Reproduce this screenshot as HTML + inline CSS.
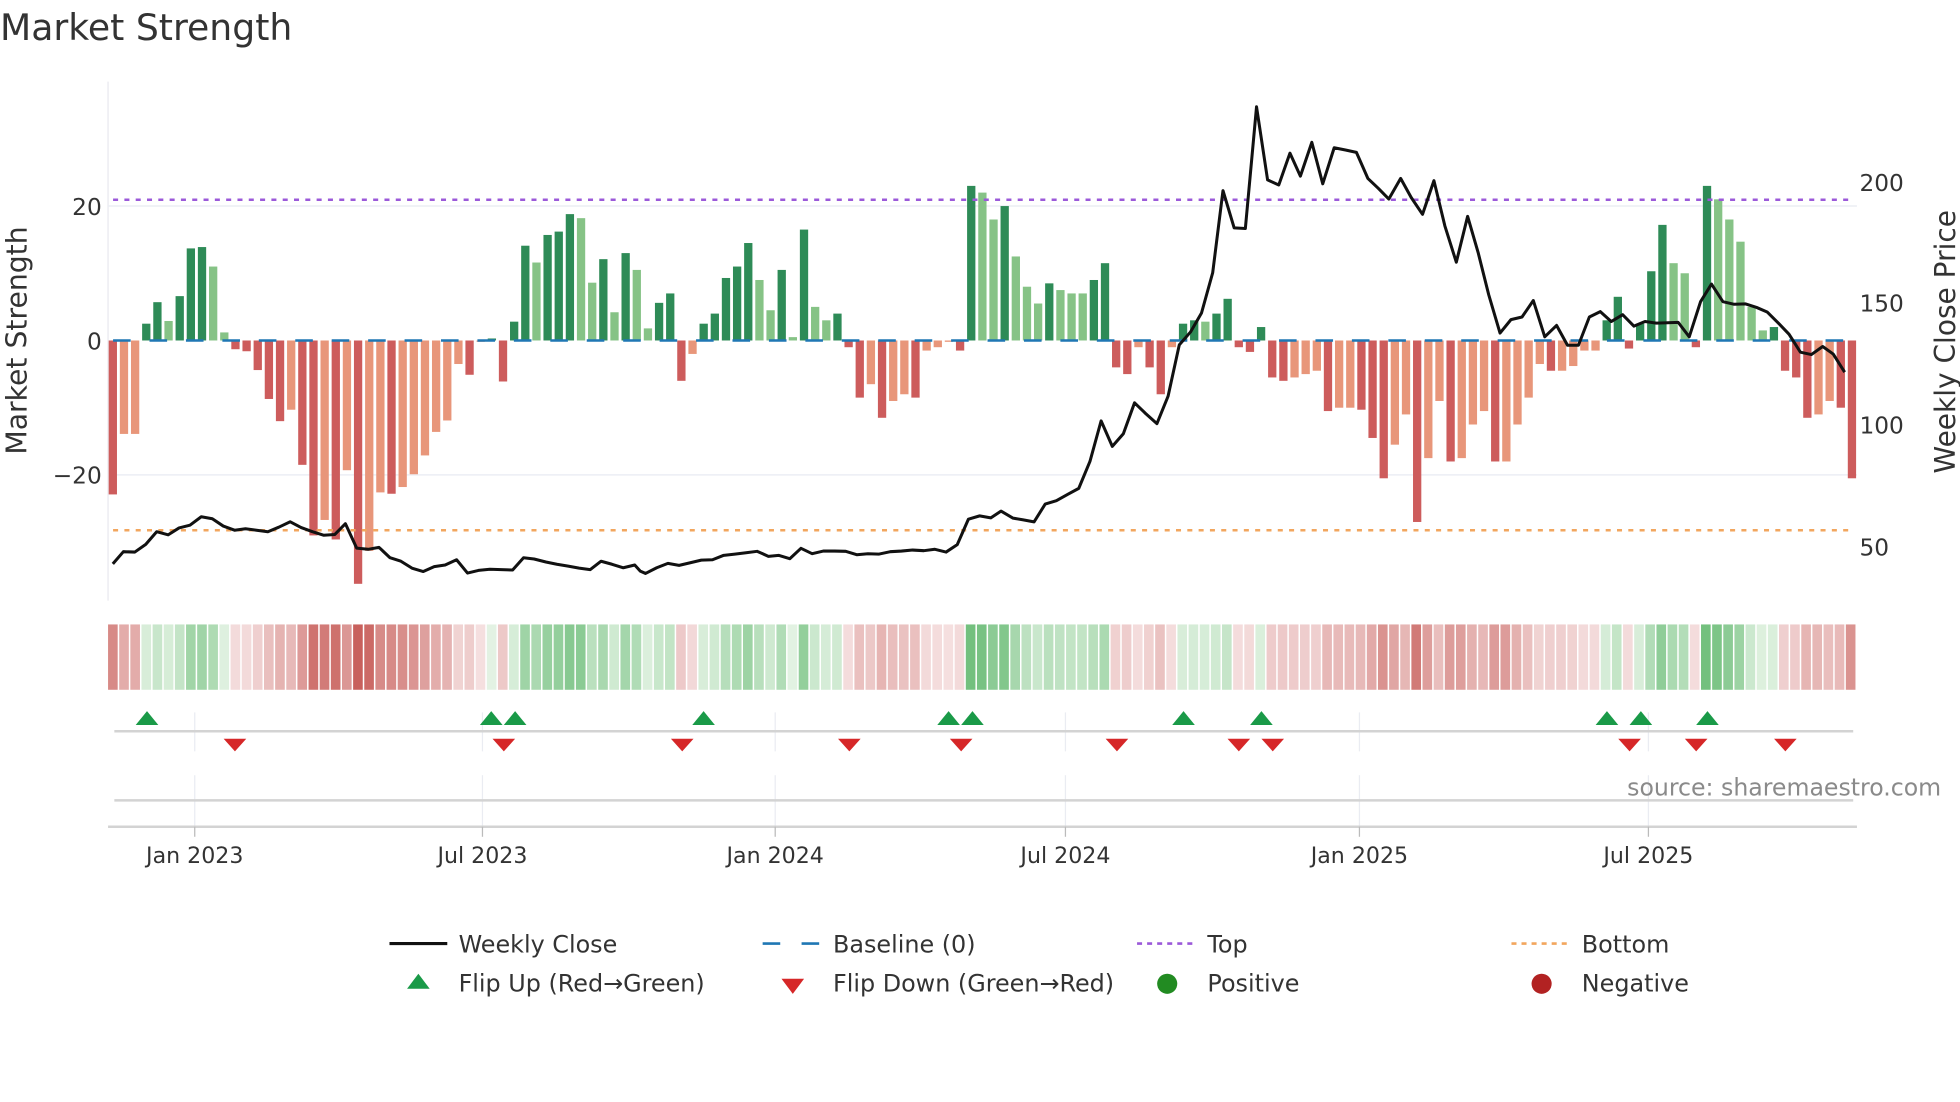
<!DOCTYPE html>
<html><head><meta charset="utf-8"><style>
html,body{margin:0;padding:0;background:#fff;}
svg{display:block;font-family:"DejaVu Sans","Liberation Sans",sans-serif;}
</style></head><body>
<svg id="s" width="1960" height="1102" viewBox="0 0 1560 877.1" preserveAspectRatio="none" xmlns="http://www.w3.org/2000/svg">
<text x="0" y="32" font-size="28.8" fill="#333">Market Strength</text>
<line x1="86" y1="65" x2="86" y2="478" stroke="#e8e8ee" stroke-width="1"/>
<line x1="86" y1="164" x2="1478" y2="164" stroke="#eceef4" stroke-width="1.2"/>
<line x1="86" y1="378" x2="1478" y2="378" stroke="#eceef4" stroke-width="1.2"/>
<g font-size="18.5" fill="#333" text-anchor="end">
<text x="81" y="171">20</text><text x="81" y="278">0</text><text x="81" y="385">−20</text>
</g>
<g font-size="18.5" fill="#333">
<text x="1480" y="152">200</text><text x="1480" y="248">150</text><text x="1480" y="345">100</text><text x="1480" y="442">50</text>
</g>
<text transform="translate(21,271) rotate(-90)" font-size="22.5" fill="#333" text-anchor="middle">Market Strength</text>
<text transform="translate(1556,272) rotate(-90)" font-size="22.3" fill="#333" text-anchor="middle">Weekly Close Price</text>
<g id="bars"></g>
<line x1="90" y1="271" x2="1478" y2="271" stroke="#1f77b4" stroke-width="2" stroke-dasharray="14 15"/>
<line x1="90" y1="159" x2="1476" y2="159" stroke="#9b59d9" stroke-width="2" stroke-dasharray="4 5"/>
<line x1="90" y1="422" x2="1476" y2="422" stroke="#f2a65e" stroke-width="2" stroke-dasharray="4 5"/>
<polyline id="price" fill="none" stroke="#111" stroke-width="2.4" stroke-linejoin="round"/>
<g id="heat"></g>
<g stroke="#eaecf2" stroke-width="1">
<line x1="155" y1="567" x2="155" y2="598"/><line x1="384" y1="567" x2="384" y2="598"/><line x1="617" y1="567" x2="617" y2="598"/><line x1="848" y1="567" x2="848" y2="598"/><line x1="1082" y1="567" x2="1082" y2="598"/><line x1="1312" y1="567" x2="1312" y2="598"/>
<line x1="155" y1="617" x2="155" y2="658"/><line x1="384" y1="617" x2="384" y2="658"/><line x1="617" y1="617" x2="617" y2="658"/><line x1="848" y1="617" x2="848" y2="658"/><line x1="1082" y1="617" x2="1082" y2="658"/><line x1="1312" y1="617" x2="1312" y2="658"/>
</g>
<line x1="91" y1="582" x2="1475" y2="582" stroke="#d3d3d3" stroke-width="2"/>
<line x1="91" y1="637" x2="1475" y2="637" stroke="#d3d3d3" stroke-width="2"/>
<line x1="86" y1="658" x2="1478" y2="658" stroke="#d3d3d3" stroke-width="2"/>
<g stroke="#bbb" stroke-width="1">
<line x1="155" y1="658" x2="155" y2="666"/><line x1="384" y1="658" x2="384" y2="666"/><line x1="617" y1="658" x2="617" y2="666"/><line x1="848" y1="658" x2="848" y2="666"/><line x1="1082" y1="658" x2="1082" y2="666"/><line x1="1312" y1="658" x2="1312" y2="666"/>
</g>
<g id="marks"></g>
<g font-size="17.6" fill="#333" text-anchor="middle">
<text x="155" y="687">Jan 2023</text><text x="384" y="687">Jul 2023</text><text x="617" y="687">Jan 2024</text><text x="848" y="687">Jul 2024</text><text x="1082" y="687">Jan 2025</text><text x="1312" y="687">Jul 2025</text>
</g>
<text x="1545" y="633" font-size="18.8" fill="#8a8a8a" text-anchor="end">source: sharemaestro.com</text>
<g font-size="19" fill="#333">
<line x1="310" y1="751" x2="356" y2="751" stroke="#111" stroke-width="2.4"/>
<text x="365" y="758">Weekly Close</text>
<line x1="607" y1="751" x2="652" y2="751" stroke="#1f77b4" stroke-width="2" stroke-dasharray="14 17"/>
<text x="663" y="758">Baseline (0)</text>
<line x1="905" y1="751" x2="950" y2="751" stroke="#9b59d9" stroke-width="2" stroke-dasharray="4 4"/>
<text x="961" y="758">Top</text>
<line x1="1203" y1="751" x2="1248" y2="751" stroke="#f2a65e" stroke-width="2" stroke-dasharray="4 4"/>
<text x="1259" y="758">Bottom</text>
<polygon points="324,787 342,787 333,775" fill="#1a9a48"/>
<text x="365" y="789">Flip Up (Red→Green)</text>
<polygon points="622,779 640,779 631,791" fill="#d62728"/>
<text x="663" y="789">Flip Down (Green→Red)</text>
<circle cx="929" cy="783" r="8" fill="#228b22"/>
<text x="961" y="789">Positive</text>
<circle cx="1227" cy="783" r="8" fill="#b22222"/>
<text x="1259" y="789">Negative</text>
</g>
</svg>
<script>
var NS="http://www.w3.org/2000/svg";
function el(t,a,p){var e=document.createElementNS(NS,t);for(var k in a)e.setAttribute(k,a[k]);p.appendChild(e);return e;}
var V=[-22.9,-13.9,-13.9,2.5,5.7,2.9,6.6,13.7,13.9,11.0,1.2,-1.3,-1.6,-4.4,-8.7,-12.0,-10.3,-18.5,-29,-26.7,-29.6,-19.3,-36.2,-31.3,-22.6,-22.8,-21.8,-19.9,-17.1,-13.6,-11.9,-3.5,-5.1,-0.2,0.3,-6.1,2.8,14.1,11.6,15.7,16.2,18.8,18.2,8.6,12.1,4.2,13.0,10.5,1.8,5.6,
7,-6,-2,2.5,4,9.3,11,14.5,9,4.5,10.5,0.5,16.5,5,3,4,-1,-8.5,-6.5,-11.5,-9,-8,-8.5,-1.5,-1,-0.2,-1.5,23,22,18,20,12.5,8,5.5,8.5,7.5,7,7,9,11.5,-4,-5,-1,-4,-8,-1,2.5,3,2.8,4,6.2,-1,-1.7,2,-5.5,-6,-5.5,-5,-4.5,-10.5,-10,-10,-10.3,-14.5,-20.5,-15.5,-11,-27,-17.5,-9,-18,-17.5,-12.5,-10.5,-18,-18,-12.5,-8.5,-3.5,-4.5,-4.5,-3.8,-1.5,-1.5,3,6.5,-1.2,2.5,10.3,17.2,11.5,10,-1,23,21,18,14.7,5,1.5,2,-4.5,-5.5,-11.5,-11,-9,-10,-20.5];
var N=V.length,x0=89.8,sp=(1474-89.8)/(N-1),bw=6.6,B=document.getElementById("bars"),H=document.getElementById("heat");
function mix(a,b,t){var r=[];for(var i=0;i<3;i++)r.push(Math.round(a[i]+(b[i]-a[i])*t));return"rgb("+r.join(",")+")";}
for(var i=0;i<N;i++){var v=V[i],p=i?V[i-1]:0,x=x0+i*sp,c;
 if(v>=0){c=(p<0||v>p)?"#2e8b57":"#86c386";}else{c=(p>=0||v<p)?"#cd5c5c":"#e8967a";}
 var h=Math.abs(v)*5.35;el("rect",{x:x-bw/2,y:v>=0?271-h:271,width:bw,height:Math.max(h,0.5),fill:c},B);
 var t=Math.min(Math.abs(v)/34,1),hc=v>=0?mix([228,243,228],[110,190,122],Math.min(Math.abs(v)/24,1)):mix([245,224,224],[200,96,92],t);
 el("rect",{x:86+i*(1392/N),y:497,width:1392/N-1.2,height:52,fill:hc},H);}
var z1=[[268,1473],[293,1441],[320,1442],[346,1422],[372,1389],[399,1397],[425,1379],[451,1372],[478,1350],[504,1355],[530,1374],[557,1385],[583,1381],[609,1385],[636,1389],[662,1377],[689,1363],[715,1378],[742,1389],[768,1398],[795,1396],[820,1368],[847,1432],[874,1435],[900,1430],[926,1457],[952,1466],[978,1484],[1005,1493],[1031,1480],[1057,1476],[1084,1462],[1110,1497],[1136,1490],[1163,1487],[1190,1488],[1217,1489],[1243,1457],[1268,1460],[1296,1468],[1322,1474],[1349,1479],[1375,1484],[1401,1488],[1427,1466],[1453,1474],[1480,1483],[1507,1476]];
var z3=[[0,1465],[12,1472],[37,1455],[62,1442],[87,1448],[112,1440],[137,1432],[162,1431],[187,1418],[212,1414],[237,1410],[262,1406],[287,1421],[310,1418],[335,1428],[360,1397],[385,1413],[410,1405],[435,1405],[460,1406],[485,1416],[510,1413],[535,1414],[560,1407],[585,1405],[610,1402],[635,1404],[660,1400],[685,1408],[710,1386],[735,1310],[760,1300],[785,1306],[808,1286],[835,1307],[858,1312],[882,1318],[907,1265],[932,1255],[957,1236],[982,1218],[1007,1138],[1032,1017],[1057,1093],[1082,1055],[1107,963],[1132,995],[1157,1025],[1182,943],[1207,790],[1232,752],[1257,695],[1282,575],[1305,330],[1330,441],[1355,443],[1380,80],[1405,298],[1430,313],[1455,218]];
var z2=[[0,460],[27,372],[53,480],[80,386],[107,392],[133,398],[160,466],[185,492],[210,520],[238,466],[263,516],[290,560],[317,472],[343,590],[370,685],[397,565],[422,660],[447,770],[474,870],[500,835],[526,828],[553,785],[580,880],[608,850],[634,902],[660,902],[686,828],[712,814],[738,840],[765,822],[792,852],[818,840],[845,844],[872,843],[897,842],[923,880],[950,788],[976,742],[1003,788],[1030,795],[1057,794],[1083,803],[1108,815],[1135,844],[1160,873],[1187,920],[1213,926],[1240,905],[1265,925],[1292,972]];
var pts=[];
z1.forEach(function(q){pts.push((q[0]/2.375/1.256).toFixed(1)+","+(q[1]/2.613/1.256).toFixed(1));});
z3.forEach(function(q){pts.push(((640+q[0]/2.24)/1.256).toFixed(1)+","+((80+q[1]/2.984)/1.256).toFixed(1));});
z2.forEach(function(q){pts.push(((1300+q[0]/2.375)/1.256).toFixed(1)+","+(q[1]/2.613/1.256).toFixed(1));});
document.getElementById("price").setAttribute("points",pts.join(" "));
var M=document.getElementById("marks");
[117,391,410,560,755,774,942,1004,1279,1306,1359].forEach(function(x){el("polygon",{points:(x-9)+",577 "+(x+9)+",577 "+x+",566",fill:"#1a9a48"},M);});
[187,401,543,676,765,889,986,1013,1297,1350,1421].forEach(function(x){el("polygon",{points:(x-9)+",588 "+(x+9)+",588 "+x+",598",fill:"#d62728"},M);});
</script>
</body></html>
